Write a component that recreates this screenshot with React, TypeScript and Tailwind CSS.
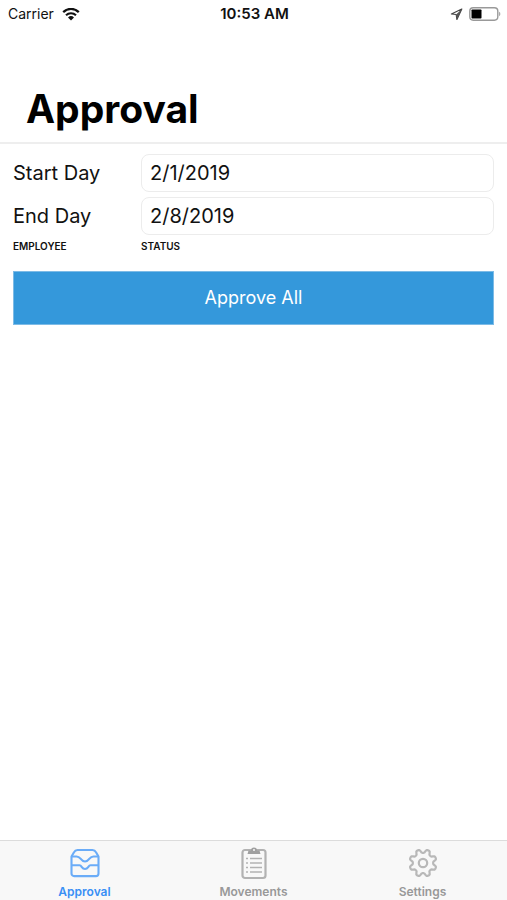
import type { ReactNode } from "react";

const GEAR_TEETH = 8;

// Closed outline of the settings gear, centred on 15,15
function gearPath() {
  const steps = 96;
  const points: string[] = [];
  for (let i = 0; i < steps; i++) {
    const angle = (i / steps) * Math.PI * 2;
    const wave = Math.cos(GEAR_TEETH * angle + Math.PI);
    const radius = 11.9 + 1.8 * Math.tanh(wave * 2);
    const x = 15 + radius * Math.cos(angle);
    const y = 15 + radius * Math.sin(angle);
    points.push(`${x.toFixed(2)} ${y.toFixed(2)}`);
  }
  return `M${points.join("L")}Z`;
}

function WifiIcon() {
  return (
    <svg width="18" height="13" viewBox="0 0 18 13" fill="none" stroke="#111" aria-hidden="true">
      <path d="M1.2 4.1a11.2 11.2 0 0 1 15.6 0" strokeWidth="2.3" />
      <path d="M4 7.2a7.2 7.2 0 0 1 10 0" strokeWidth="2.1" />
      <path d="M9 12.4 6 9.5a4.3 4.3 0 0 1 6 0Z" fill="#111" stroke="none" />
    </svg>
  );
}

function LocationIcon() {
  return (
    <svg width="13" height="13" viewBox="0 0 13 13" aria-hidden="true">
      <path
        d="M11.8 1 1.4 6l4.8.5.7 4.9Z"
        fill="none"
        stroke="#444"
        strokeWidth="1.2"
        strokeLinejoin="round"
      />
      <path d="M11.8 1 6.2 6.5l.7 4.9Z" fill="#555" />
    </svg>
  );
}

function BatteryIcon() {
  return (
    <svg width="32" height="14" viewBox="0 0 32 14" aria-hidden="true">
      <rect x="0.8" y="0.8" width="28" height="12.4" rx="3.4" fill="none" stroke="#999" strokeWidth="1.4" />
      <rect x="2.5" y="2.5" width="10" height="9" rx="0.8" fill="#000" />
      <path d="M30.2 4.8c1.5.6 1.5 3.8 0 4.4Z" fill="#999" />
    </svg>
  );
}

function DrawerIcon() {
  return (
    <svg width="30" height="30" viewBox="0 0 30 30" fill="none" stroke="#6aacf8" strokeWidth="2.1" strokeLinejoin="round" aria-hidden="true">
      <path d="M1.5 8.5 4 4.200C4.800 2.700 5.900 2 7.500 2h15c1.600 0 2.700.7 3.500 2.200l2.500 4.300v17a2.600 2.600 0 0 1-2.600 2.600H4.100a2.600 2.600 0 0 1-2.600-2.600Z" />
      <path d="M1.5 8.5H6.5c2 0 3 .9 4 2.200 1.200 1.600 2.400 2.800 4.500 2.800s3.300-1.200 4.500-2.800c1-1.300 2-2.200 4-2.200h5" />
      <path d="M1.5 17.300h8c1.500 0 1.600.9 2.300 1.900.8 1.100 1.700 1.800 3.200 1.800s2.400-.7 3.200-1.800c.7-1 .8-1.900 2.300-1.900h8" />
    </svg>
  );
}

function ClipboardIcon() {
  return (
    <svg width="30" height="34" viewBox="0 0 30 34" fill="none" stroke="#b2b2b2" aria-hidden="true">
      <rect x="3.5" y="4" width="23" height="28" rx="2.5" strokeWidth="2.2" />
      <path d="M9.5 4.5H12a3 3 0 0 1 6 0h2.500l1 3.500h-13Z" fill="#a0a0a0" stroke="none" />
      <circle cx="15" cy="4" r="1" fill="#f8f8f8" stroke="none" />
      <path d="M11 12.5H23M11 17H23M11 21.5H23M11 26H23" strokeWidth="1.6" />
      <path d="M7 12.5h2M7 17h2M7 21.5h2M7 26h2" strokeWidth="1.6" />
    </svg>
  );
}

function GearIcon() {
  return (
    <svg width="30" height="30" viewBox="0 0 30 30" fill="none" stroke="#b8b8b8" strokeWidth="2.2" strokeLinejoin="round" aria-hidden="true">
      <path d={gearPath()} />
      <circle cx="15" cy="15" r="4.2" />
    </svg>
  );
}

interface DayFieldProps {
  readonly id: string;
  readonly label: string;
  readonly value: string;
}

function DayField({ id, label, value }: DayFieldProps) {
  return (
    <div className="flex items-center">
      <label htmlFor={id} className="w-32 shrink-0 text-xl">
        {label}
      </label>
      <input
        id={id}
        type="text"
        defaultValue={value}
        className="h-[38px] min-w-0 flex-1 rounded-lg border border-[#ececec] bg-white px-2 text-xl"
      />
    </div>
  );
}

interface TabProps {
  readonly label: string;
  readonly icon: ReactNode;
  readonly active?: boolean;
}

function Tab({ label, icon, active = false }: TabProps) {
  return (
    <button
      type="button"
      aria-current={active ? "page" : undefined}
      className={
        active
          ? "flex flex-1 flex-col items-center text-[#3a8ff5]"
          : "flex flex-1 flex-col items-center text-[#999999]"
      }
    >
      <span className="flex h-11 items-center">{icon}</span>
      <span className="text-xs leading-4 font-semibold">{label}</span>
    </button>
  );
}

export default function App() {
  return (
    <div className="flex min-h-screen flex-col bg-white font-['Inter','Liberation_Sans',sans-serif] text-[#111]">
      <div className="grid h-7 grid-cols-3 items-center pr-1.5 pl-2 text-sm">
        <div className="flex items-center gap-2">
          <span>Carrier</span>
          <WifiIcon />
        </div>
        <span className="text-center text-[15px] font-semibold">10:53 AM</span>
        <div className="flex items-center justify-end gap-1.5">
          <LocationIcon />
          <BatteryIcon />
        </div>
      </div>

      <header className="border-b-2 border-[#eeeeee] px-[26px] pt-14 pb-2">
        <h1 className="text-[39px] leading-[50px] font-bold text-black">Approval</h1>
      </header>

      <main className="flex-1 px-[13px] pt-2.5">
        <form className="flex flex-col gap-[5px]">
          <DayField id="start-day" label="Start Day" value="2/1/2019" />
          <DayField id="end-day" label="End Day" value="2/8/2019" />
        </form>
        <table className="mt-[3px] w-full table-fixed text-left text-[10px] leading-4">
          <thead>
            <tr>
              <th className="w-32 font-semibold">EMPLOYEE</th>
              <th className="font-semibold">STATUS</th>
            </tr>
          </thead>
        </table>
        <button
          type="button"
          className="mt-[17px] h-[54px] w-full border border-[#7dbbe6] bg-[#3498db] text-lg text-white"
        >
          Approve All
        </button>
      </main>

      <nav className="flex h-[60px] border-t border-[#dcdcdc] bg-[#f8f8f8]">
        <Tab label="Approval" icon={<DrawerIcon />} active />
        <Tab label="Movements" icon={<ClipboardIcon />} />
        <Tab label="Settings" icon={<GearIcon />} />
      </nav>
    </div>
  );
}
